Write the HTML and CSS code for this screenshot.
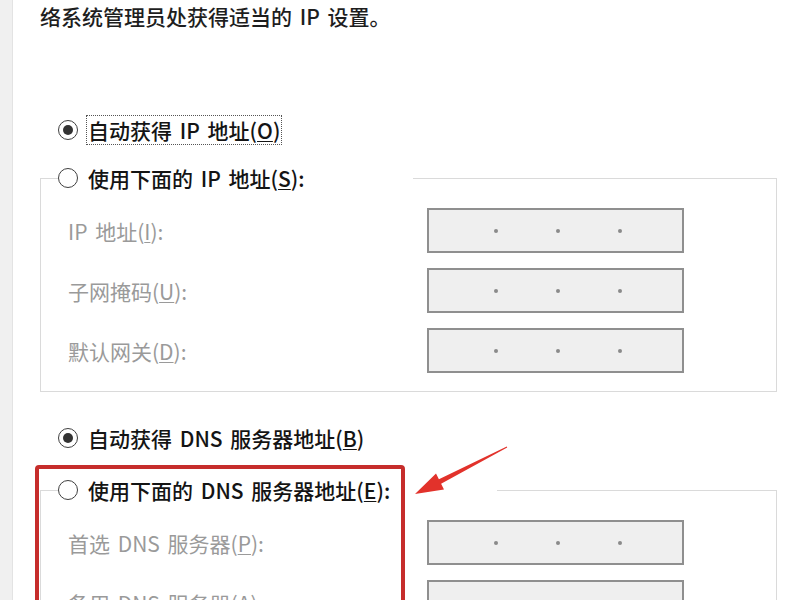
FILE: index.html
```html
<!DOCTYPE html>
<html lang="zh-CN">
<head>
<meta charset="utf-8">
<title>IP 设置</title>
<link rel="stylesheet" href="styles.css">
</head>
<body>
<div class="page">
  <div class="side"></div>
  <div class="main">
    <p class="intro">络系统管理员处获得适当的 IP 设置。</p>

    <div class="radio radio-first">
      <span class="dot on"></span><span class="rtext focus">自动获得 IP 地址(<u>O</u>)</span>
    </div>

    <fieldset class="group group-ip">
      <legend class="radio legend-ip"><span class="dot"></span><span class="rtext">使用下面的 IP 地址(<u>S</u>):</span></legend>
      <div class="rows">
        <span class="lbl">IP 地址(<u>I</u>):</span>
        <span class="ip"><i></i><i></i><i></i></span>
        <span class="lbl">子网掩码(<u>U</u>):</span>
        <span class="ip"><i></i><i></i><i></i></span>
        <span class="lbl">默认网关(<u>D</u>):</span>
        <span class="ip"><i></i><i></i><i></i></span>
      </div>
    </fieldset>

    <div class="radio radio-dns">
      <span class="dot on"></span><span class="rtext">自动获得 DNS 服务器地址(<u>B</u>)</span>
    </div>

    <fieldset class="group group-dns">
      <legend class="radio legend-dns"><span class="dot"></span><span class="rtext">使用下面的 DNS 服务器地址(<u>E</u>):</span></legend>
      <div class="rows">
        <span class="lbl">首选 DNS 服务器(<u>P</u>):</span>
        <span class="ip"><i></i><i></i><i></i></span>
        <span class="lbl">备用 DNS 服务器(<u>A</u>):</span>
        <span class="ip"><i></i><i></i><i></i></span>
      </div>
    </fieldset>
  </div>
</div>

<div class="highlight"></div>
<svg class="arrow" width="800" height="600" viewBox="0 0 800 600" aria-hidden="true">
  <polygon points="415,494 444,489.5 441.1,483.7 507.2,447.4 506.8,446.6 438.9,479.3 436,473.5" fill="#e2322b"/>
</svg>
</body>
</html>
```

FILE: styles.css
```css
html, body {
  margin: 0;
  padding: 0;
  background: #ffffff;
  overflow: hidden;
}

body {
  font-family: "Noto Sans CJK SC", "Noto Sans", "Liberation Sans", sans-serif;
  color: #1c1c1c;
  width: 800px;
  height: 600px;
  position: relative;
}

.page {
  display: flex;
  min-height: 600px;
}

.side {
  width: 12px;
  flex: none;
  background: #f0f0f0;
  border-right: 1px solid #e3e3e3;
}

.main {
  flex: 1;
  padding-left: 27px;
}

.intro {
  margin: 0;
  height: 32px;
  line-height: 32px;
  font-size: 21px;
  font-weight: 500;
  word-spacing: 3px;
  color: #1e1e1e;
  white-space: nowrap;
}

.radio {
  display: flex;
  align-items: center;
  height: 30px;
  font-size: 21px;
  font-weight: 500;
  word-spacing: 3px;
  color: #141414;
  white-space: nowrap;
}

.radio-first {
  margin-top: 83px;
  margin-left: 18px;
}

.radio-dns {
  margin-top: 31px;
  margin-left: 18px;
}

.dot {
  width: 20px;
  height: 20px;
  box-sizing: border-box;
  border: 1.5px solid #3f3f3f;
  border-radius: 50%;
  background: #fff;
  display: flex;
  align-items: center;
  justify-content: center;
  flex: none;
}

.dot.on::after {
  content: "";
  width: 10px;
  height: 10px;
  border-radius: 50%;
  background: #333;
}

.rtext {
  margin-left: 8px;
  padding: 0 1px;
  line-height: 28px;
  border: 1px dotted transparent;
}

.rtext.focus {
  border-color: #555;
}

u {
  text-decoration: underline;
  text-decoration-thickness: 1px;
  text-underline-offset: 2px;
}

.group {
  box-sizing: border-box;
  width: 737px;
  margin: 0;
  padding: 15px 0 18px 17px;
  border: 1px solid #dadada;
}

.group-ip {
  margin-top: 18px;
}

.group-dns {
  margin-top: 22px;
}

.group legend {
  padding: 0;
  margin: 0;
  background: #fff;
}

.legend-ip {
  width: 355px;
}

.legend-dns {
  width: 439px;
}

.rows {
  margin-left: 10px;
  display: grid;
  grid-template-columns: 359px 257px;
  row-gap: 15px;
  align-items: center;
}

.lbl {
  font-size: 21px;
  word-spacing: 3px;
  color: #9a9a9a;
  white-space: nowrap;
}

.ip {
  box-sizing: border-box;
  height: 45px;
  border: 2px solid #8f8f8f;
  background: #efefef;
  display: flex;
  align-items: center;
  padding-left: 65px;
  gap: 58px;
}

.ip i {
  width: 4px;
  height: 4px;
  border-radius: 50%;
  background: #8a8a8a;
  display: block;
}

.highlight {
  position: absolute;
  left: 35px;
  top: 465px;
  width: 370px;
  height: 200px;
  box-sizing: border-box;
  border: 4px solid #c62d2b;
  border-radius: 4px;
  pointer-events: none;
}

.arrow {
  position: absolute;
  left: 0;
  top: 0;
  pointer-events: none;
}
```
